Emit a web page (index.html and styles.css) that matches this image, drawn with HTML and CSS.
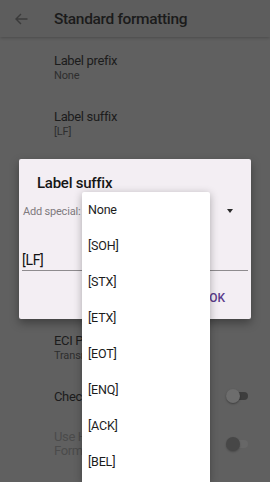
FILE: index.html
```html
<!DOCTYPE html>
<html>
<head>
<meta charset="utf-8">
<link rel="stylesheet" href="styles.css">
</head>
<body>
<div class="screen">
  <header class="appbar">
    <svg class="back" width="13" height="12" viewBox="0 0 13 12"><path d="M6 1 L1 6 L6 11 M1 6 H12.5" fill="none" stroke="#3b3b3b" stroke-width="1.4"/></svg>
    <div class="appbar-title">Standard formatting</div>
  </header>
  <div class="list">
    <div class="pref"><div class="pref-title">Label prefix</div><div class="pref-sub">None</div></div>
    <div class="pref"><div class="pref-title">Label suffix</div><div class="pref-sub">[LF]</div></div>
    <div class="pref"></div>
    <div class="pref"></div>
    <div class="pref"></div>
    <div class="pref"><div class="pref-title">ECI Protocol</div><div class="pref-sub">Transmit ECI</div></div>
    <div class="pref pref-switch short"><div class="pref-text"><div class="pref-title">Check digit</div></div><div class="switch on"><span class="track"></span><span class="thumb"></span></div></div>
    <div class="pref pref-switch tall"><div class="pref-text disabled"><div class="pref-title">Use HID</div><div class="pref-title">Format</div></div><div class="switch off"><span class="track"></span><span class="thumb"></span></div></div>
  </div>

  <div class="dialog">
    <div class="dialog-title">Label suffix</div>
    <div class="special-row">
      <span class="special-label">Add special:</span>
      <span class="caret"></span>
    </div>
    <div class="input">[LF]</div>
    <div class="actions">
      <span class="btn">OK</span>
    </div>
  </div>

  <div class="menu">
    <div class="menu-item">None</div>
    <div class="menu-item">[SOH]</div>
    <div class="menu-item">[STX]</div>
    <div class="menu-item">[ETX]</div>
    <div class="menu-item">[EOT]</div>
    <div class="menu-item">[ENQ]</div>
    <div class="menu-item">[ACK]</div>
    <div class="menu-item">[BEL]</div>
  </div>
</div>
</body>
</html>
```

FILE: styles.css
```css
* { box-sizing: border-box; }
html, body { margin: 0; padding: 0; }
body {
  width: 270px;
  height: 482px;
  overflow: hidden;
  background: #606060;
  font-family: Roboto, "Liberation Sans", sans-serif;
}
.screen {
  position: relative;
  width: 270px;
  height: 482px;
  overflow: hidden;
}
.appbar {
  height: 37px;
  background: #5d5d5d;
  display: flex;
  align-items: center;
  box-shadow: 0 1px 3px rgba(0,0,0,0.22);
  position: relative;
  z-index: 1;
}
.back {
  margin-left: 15px;
  margin-top: 1px;
}
.appbar-title {
  margin-left: 26px;
  font-size: 15.5px;
  font-weight: 500;
  letter-spacing: -0.35px;
  color: #1b1b1b;
}
.list {
  padding-top: 2.5px;
}
.pref {
  height: 56px;
  padding-left: 54px;
  display: flex;
  flex-direction: column;
  justify-content: center;
}
.pref-title {
  font-size: 13px;
  line-height: 15px;
  letter-spacing: -0.35px;
  color: #1c1c1c;
}
.pref-sub {
  font-size: 11px;
  line-height: 15px;
  letter-spacing: -0.15px;
  color: #2e2e2e;
}
.pref-switch {
  flex-direction: row;
  align-items: center;
  justify-content: space-between;
  padding-right: 21px;
}
.pref-switch.short { height: 41px; }
.pref-switch.tall { height: 55px; }
.pref-text.disabled .pref-title { color: #4b4b4b; line-height: 14px; }
.switch {
  position: relative;
  width: 24px;
  height: 16px;
}
.switch .track {
  position: absolute;
  left: 5px;
  top: 4px;
  width: 18px;
  height: 8px;
  border-radius: 4px;
}
.switch .thumb {
  position: absolute;
  left: 1px;
  top: 1px;
  width: 14px;
  height: 14px;
  border-radius: 50%;
}
.switch.on .track { background: #3e3e3e; }
.switch.on .thumb { background: #6d6d6d; box-shadow: 0 1px 2px rgba(0,0,0,0.35); }
.switch.off .track { background: #676767; }
.switch.off .thumb { background: #474747; box-shadow: 0 1px 2px rgba(0,0,0,0.25); }

.dialog {
  position: absolute;
  left: 19px;
  top: 159px;
  width: 232px;
  height: 160px;
  background: #f3eef3;
  border-radius: 2px;
  box-shadow: 0 4px 10px rgba(0,0,0,0.35);
  padding-top: 14px;
}
.dialog-title {
  padding-left: 18px;
  font-size: 15px;
  font-weight: 500;
  line-height: 20px;
  letter-spacing: -0.25px;
  color: #161616;
}
.special-row {
  margin-top: 10px;
  height: 16px;
  display: flex;
  align-items: center;
  justify-content: space-between;
  padding-left: 4px;
  padding-right: 18px;
}
.special-label {
  font-size: 11px;
  letter-spacing: -0.2px;
  color: #7e7a7e;
}
.caret {
  width: 0;
  height: 0;
  border-left: 3.5px solid transparent;
  border-right: 3.5px solid transparent;
  border-top: 4px solid #2a2a2a;
}
.input {
  margin: 32px 3px 0 3px;
  font-size: 14px;
  line-height: 18px;
  letter-spacing: -0.3px;
  color: #121212;
  border-bottom: 1.5px solid #8e8b8e;
  height: 19.5px;
}
.actions {
  margin-top: 19px;
  display: flex;
  justify-content: flex-end;
  padding-right: 26px;
}
.btn {
  font-size: 12px;
  font-weight: 500;
  line-height: 16px;
  color: #5a3b8c;
}

.menu {
  position: absolute;
  left: 82px;
  top: 192px;
  width: 128px;
  height: 290px;
  background: #ffffff;
  border-radius: 2px 2px 0 0;
  box-shadow: 0 2px 8px rgba(0,0,0,0.3);
}
.menu-item {
  height: 36px;
  line-height: 36px;
  padding-left: 6px;
  font-size: 12.5px;
  letter-spacing: -0.2px;
  color: #1c1c1c;
}
```
